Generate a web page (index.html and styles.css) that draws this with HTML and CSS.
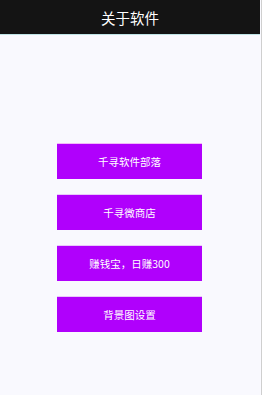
FILE: index.html
```html
<!DOCTYPE html>
<html>
<head>
<meta charset="utf-8">
<link rel="stylesheet" href="styles.css">
</head>
<body>
<div class="screen">
  <div class="app">
    <header class="topbar">关于软件</header>
    <main class="content">
      <div class="btn">千寻软件部落</div>
      <div class="btn">千寻微商店</div>
      <div class="btn">赚钱宝，日赚300</div>
      <div class="btn">背景图设置</div>
    </main>
  </div>
  <div class="edge"></div>
</div>
</body>
</html>
```
FILE: styles.css
```css
html, body {
  margin: 0;
  padding: 0;
  background: #fafaff;
}
.screen {
  display: flex;
  width: 262px;
  height: 395px;
  overflow: hidden;
}
.app {
  width: 260px;
  display: flex;
  flex-direction: column;
  background: #f9f9fe;
}
.edge {
  width: 1px;
  margin-left: 1px;
  background: #cfcfcf;
}
.topbar {
  height: 34px;
  background: #141414;
  border-bottom: 1px solid #bfe4e6;
  color: #ffffff;
  font-family: "Noto Sans CJK SC", "Noto Sans", sans-serif;
  font-size: 14.5px;
  display: flex;
  align-items: center;
  justify-content: center;
}
.content {
  display: flex;
  flex-direction: column;
  align-items: flex-start;
  padding-top: 108px;
  padding-left: 57px;
  gap: 15px;
}
.btn {
  width: 145px;
  height: 36px;
  background: #b000fc;
  border-top: 1px solid #f2b8f8;
  box-sizing: border-box;
  color: #ffffff;
  font-family: "Noto Sans CJK SC", "Noto Sans", sans-serif;
  font-size: 10.5px;
  display: flex;
  align-items: center;
  justify-content: center;
}
.btn + .btn {
  border-top-color: #e8c8fa;
}
```
